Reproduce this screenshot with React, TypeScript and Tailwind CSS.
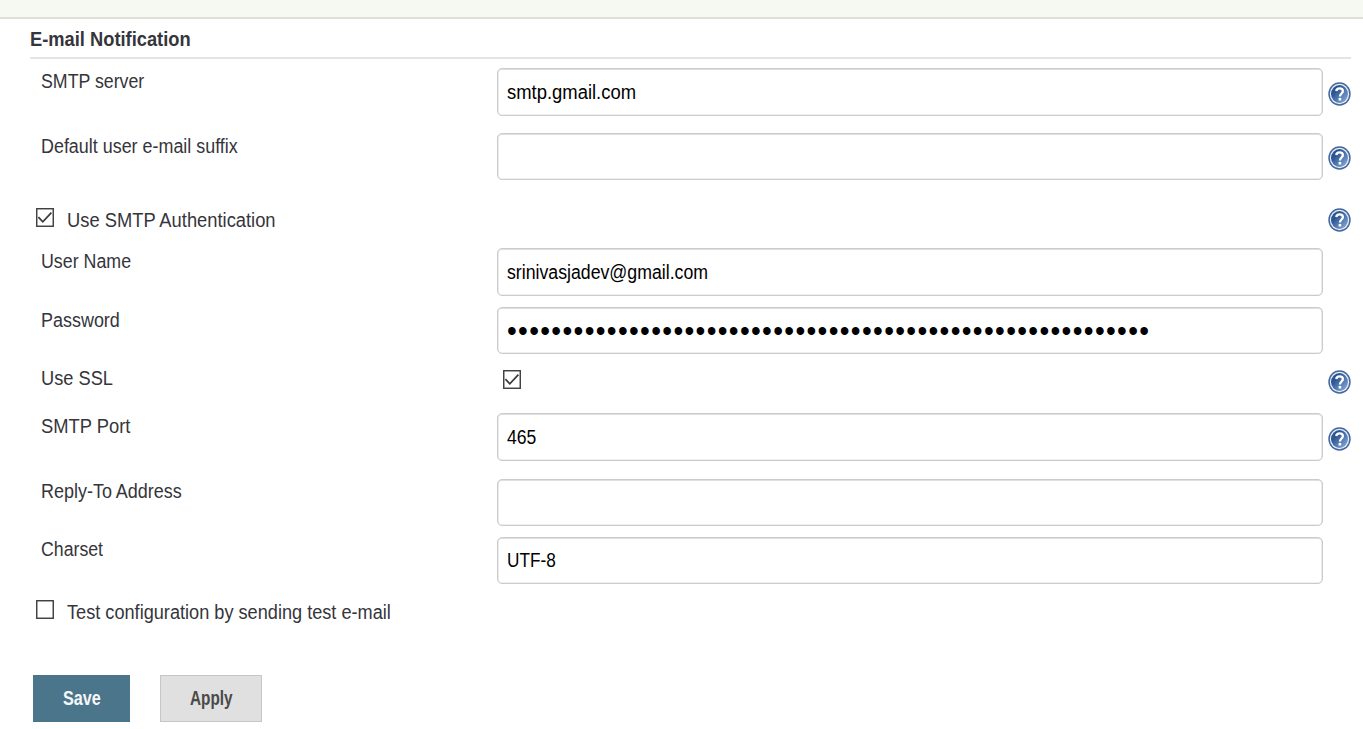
import { useLayoutEffect, useRef, useState } from 'react';
import type { ReactNode } from 'react';

/** Single line of text condensed or stretched to a given width. */
function Fit({ width, children, className = '' }: { width: number; children: ReactNode; className?: string }) {
  const ref = useRef<HTMLSpanElement>(null);
  const [scale, setScale] = useState(0.9);
  useLayoutEffect(() => {
    if (ref.current) setScale(width / ref.current.offsetWidth);
  }, [width]);
  return (
    <span className="block h-6 overflow-visible leading-6" style={{ width }}>
      <span
        ref={ref}
        className={`inline-block origin-left whitespace-nowrap leading-6 ${className}`}
        style={{ transform: `scaleX(${scale})` }}
      >
        {children}
      </span>
    </span>
  );
}

function Help({ className }: { className: string }) {
  return (
    <svg className={`ml-auto h-6 w-[23px] shrink-0 ${className}`} viewBox="0 0 23 24" preserveAspectRatio="none">
      <defs>
        <linearGradient id="disc" x1="0" y1="0" x2="1" y2="1">
          <stop offset="0.3" stopColor="#2c5593" />
          <stop offset="1" stopColor="#8fb0dc" />
        </linearGradient>
      </defs>
      <ellipse cx="11.5" cy="12" rx="11.2" ry="11.7" fill="#44679f" />
      <ellipse cx="11.5" cy="12" rx="9.7" ry="10.2" fill="#e9f0fa" />
      <ellipse cx="11.5" cy="12" rx="8.5" ry="9" fill="url(#disc)" />
      <path
        d="M8.2 9C8.5 7 9.8 6.4 11.6 6.4C13.7 6.4 14.9 7.4 14.9 9.1C14.9 11.5 11.9 11.6 11.9 14.6"
        fill="none"
        stroke="#fff"
        strokeWidth="2.3"
      />
      <rect x="10.6" y="15.9" width="2.6" height="2.6" fill="#fff" />
    </svg>
  );
}

function Check({ checked, className }: { checked?: boolean; className: string }) {
  return (
    <svg className={`h-[19px] w-[18px] shrink-0 ${className}`} viewBox="0 0 18 19">
      <rect x="0.75" y="0.75" width="16.5" height="17.5" fill="#fff" stroke="#3a3a3a" strokeWidth="1.4" />
      {checked && <path d="M2.4 9.2L6.8 13.8L15.4 4.6" fill="none" stroke="#3a3a3a" strokeWidth="1.7" />}
    </svg>
  );
}

function Field({ children, className }: { children?: ReactNode; className: string }) {
  return (
    <div
      className={`flex w-[826px] shrink-0 items-center rounded-[5px] border-[1.5px] border-[#cbcbcb] bg-white pl-[9px] text-black shadow-[inset_0_0_0_0.6px_rgba(0,0,0,0.12),inset_0_1px_1px_rgba(0,0,0,0.07)] ${className}`}
    >
      {children}
    </div>
  );
}

function Label({ width, className, children }: { width: number; className: string; children: ReactNode }) {
  return (
    <div className={`w-[467px] shrink-0 pl-[11px] ${className}`}>
      <Fit width={width}>{children}</Fit>
    </div>
  );
}

export default function App() {
  return (
    <div className="h-[729px] w-[1363px] overflow-hidden bg-white font-['Liberation_Sans',Arial,sans-serif] text-[20px] text-[#35353b]">
      <div className="h-[19px] border-b-2 border-[#dddfd9] bg-[#f6f9f2]" />
      <div className="ml-[30px] w-[1321px]">
        <div className="h-10 border-b-2 border-[#e4e4e4] pt-[8px]">
          <Fit width={161} className="font-bold">E-mail Notification</Fit>
        </div>

        <div className="flex h-[74px] items-start pt-[9px]">
          <Label width={103} className="mt-px">SMTP server</Label>
          <Field className="h-12"><Fit width={129}>smtp.gmail.com</Fit></Field>
          <Help className="mt-[14px]" />
        </div>
        <div className="flex h-[69px] items-start">
          <Label width={197} className="mt-px">Default user e-mail suffix</Label>
          <Field className="h-[47px]" />
          <Help className="mt-[13px]" />
        </div>
        <div className="flex h-[46px] items-start">
          <Check checked className="ml-[6px] mt-[6px]" />
          <div className="ml-[13px] mt-[6px]"><Fit width={209}>Use SMTP Authentication</Fit></div>
          <Help className="mt-[6px]" />
        </div>
        <div className="flex h-[59px] items-start">
          <Label width={90} className="mt-px">User Name</Label>
          <Field className="h-12"><Fit width={201}>srinivasjadev@gmail.com</Fit></Field>
        </div>
        <div className="flex h-[59px] items-start">
          <Label width={79} className="mt-px">Password</Label>
          <Field className="h-[47px]">
            <Fit width={643} className="text-[30px] tracking-[1.4px]">{'•'.repeat(58)}</Fit>
          </Field>
        </div>
        <div className="flex h-[47px] items-start">
          <Label width={72} className="">Use SSL</Label>
          <Check checked className="ml-[6px] mt-[4px]" />
          <Help className="mt-[4px]" />
        </div>
        <div className="flex h-[66px] items-start">
          <Label width={89} className="mt-px">SMTP Port</Label>
          <Field className="h-12"><Fit width={29}>465</Fit></Field>
          <Help className="mt-[14px]" />
        </div>
        <div className="flex h-[58px] items-start">
          <Label width={141} className="">Reply-To Address</Label>
          <Field className="h-[47px]" />
        </div>
        <div className="flex h-[63px] items-start">
          <Label width={62} className="">Charset</Label>
          <Field className="h-[47px] pb-[2px]"><Fit width={49}>UTF-8</Fit></Field>
        </div>
        <div className="flex h-[75px] items-start">
          <Check className="ml-[6px]" />
          <div className="ml-[13px]"><Fit width={324}>Test configuration by sending test e-mail</Fit></div>
        </div>

        <div className="ml-[3px] flex gap-[30px] font-bold">
          <button className="flex h-[47px] w-[97px] items-center justify-center bg-[#4b758b] pb-[2px] text-[#f4f7f8]">
            <Fit width={38}>Save</Fit>
          </button>
          <button className="flex h-[47px] w-[102px] items-center justify-center border border-[#c6c6c6] bg-[#e0e0e0] pb-[2px] text-[#4a4a4a]">
            <Fit width={43}>Apply</Fit>
          </button>
        </div>
      </div>
    </div>
  );
}
